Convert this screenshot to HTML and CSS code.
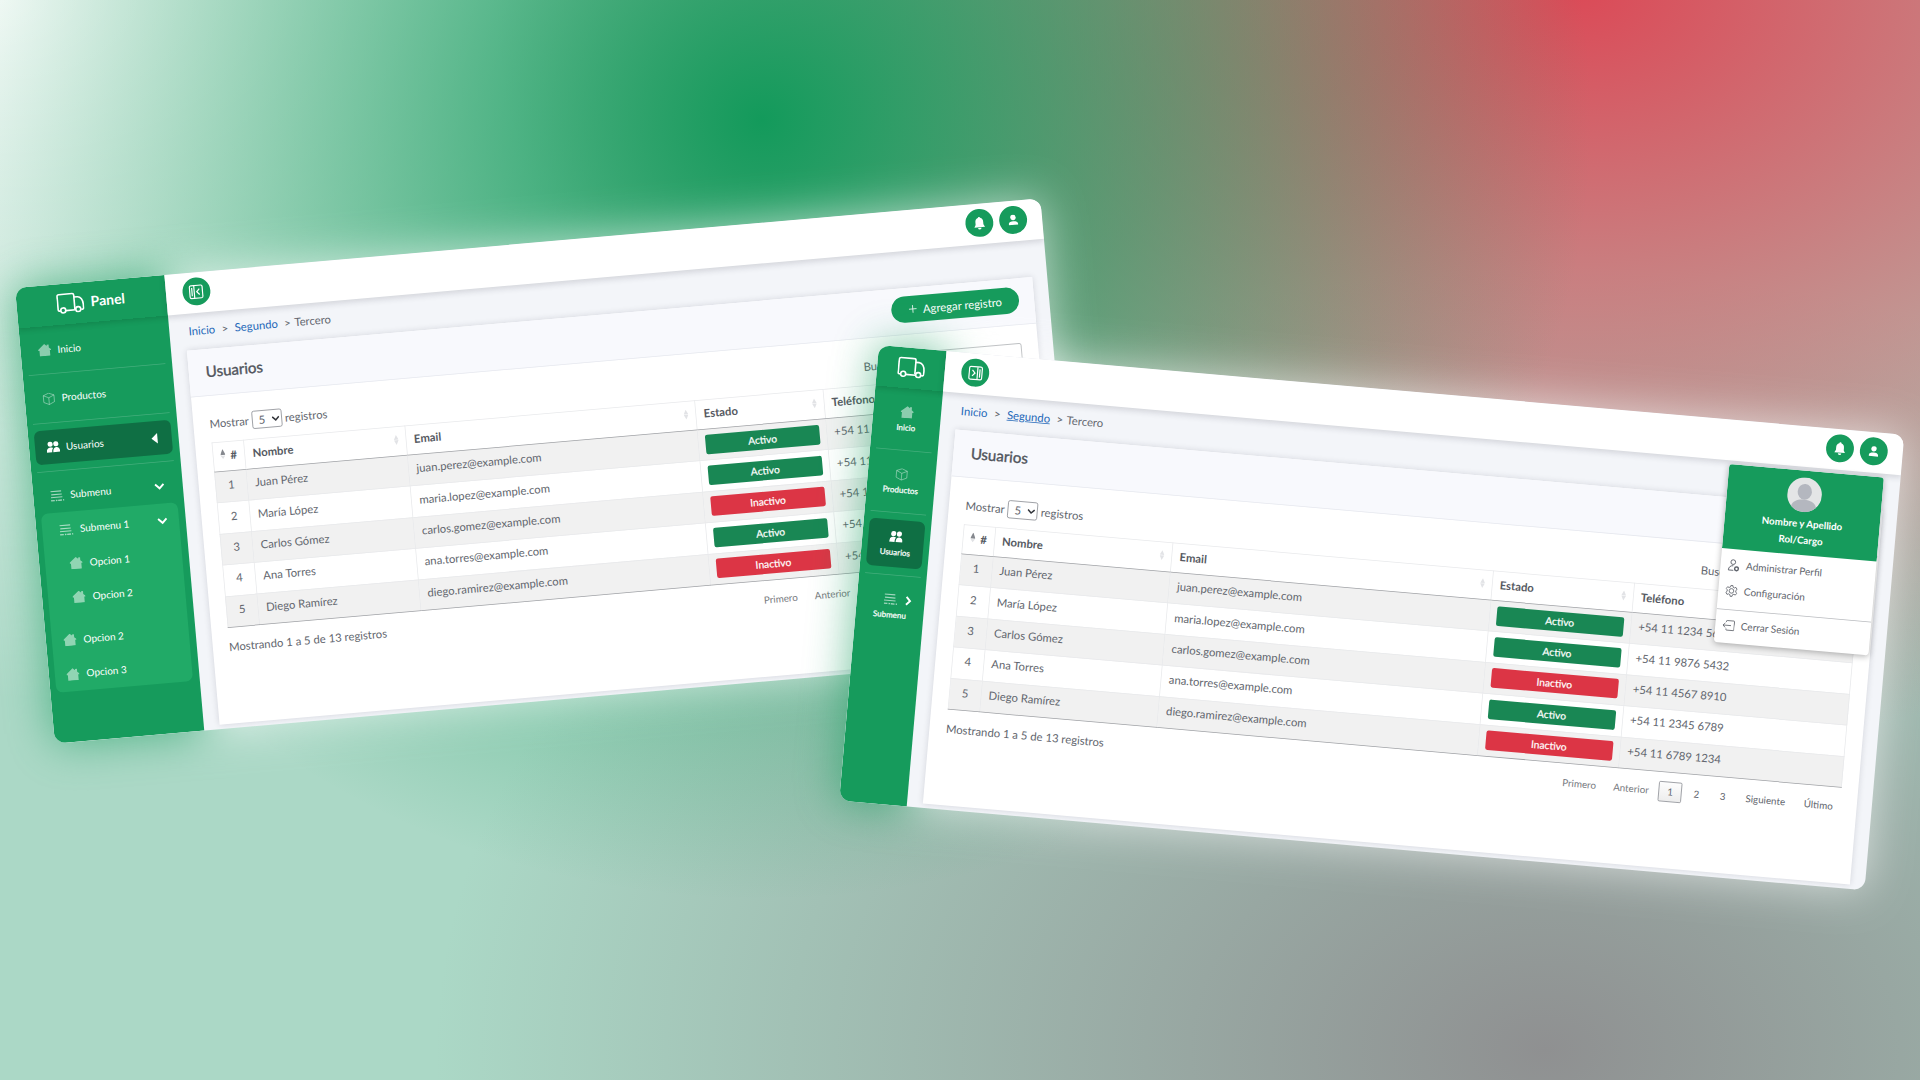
FILE: index.html
```
<!DOCTYPE html>
<html lang="es">
<head>
<meta charset="utf-8">
<title>Panel</title>
<link rel="stylesheet" href="styles.css">
</head>
<body>
<svg class="sprite" aria-hidden="true">
  <symbol id="truck" viewBox="0 0 38 28"><g fill="none" stroke="currentColor" stroke-width="2.2" stroke-linejoin="round"><path d="M5 24H3.2A1.6 1.6 0 0 1 1.6 22.4V4A2.4 2.4 0 0 1 4 1.6H22A2.4 2.4 0 0 1 24.400 4V23"/><path d="M24.400 6.500H29C33.500 6.500 36.400 12 36.400 17V22.400A1.600 1.600 0 0 1 34.800 24H33"/><path d="M12 24H25"/><circle cx="8.500" cy="23.500" r="3.400"/><circle cx="29" cy="23.500" r="3.400"/></g></symbol>
  <symbol id="home" viewBox="0 0 16 16"><path d="M8 0.500L11 3V1.500h2.500v3.600L16 7.200V8.500H14.500V15.500H1.500V8.500H0V7.200Z" fill="currentColor" opacity=".5"/></symbol>
  <symbol id="cube" viewBox="0 0 18 18"><path d="M9 1L16.500 4V13.500L9 17L1.500 13.500V4ZM1.500 4L9 7.500L16.500 4M9 7.500V17" fill="none" stroke="currentColor" stroke-linejoin="round" opacity=".55"/></symbol>
  <symbol id="users" viewBox="0 0 18 16"><g fill="currentColor"><circle cx="5.300" cy="4.200" r="3.400"/><circle cx="12.900" cy="4.200" r="3.400"/><path d="M0 15C0 10.500 2.300 8.500 5.200 8.500S8.800 9.500 8.800 9.500C7.500 11 7.300 13 7.300 15ZM8.700 15C8.700 10.500 10.500 8.500 13.200 8.500S18 10.500 18 15Z"/></g></symbol>
  <symbol id="lines" viewBox="0 0 18 16"><path d="M0 2H14.500M1 6.200H15M0 10H15.500" stroke="currentColor" stroke-width="1.500" opacity=".6"/><path d="M0 14.200H18" stroke="currentColor" stroke-width="1.800" stroke-dasharray="5 1.500 2 1" opacity=".6"/></symbol>
  <symbol id="down" viewBox="0 0 12 12"><path d="M1.200 3.500L6 8.200L10.800 3.500" fill="none" stroke="currentColor" stroke-width="2.200"/></symbol>
  <symbol id="right" viewBox="0 0 12 12"><path d="M4 1.500L8.200 6L4 10.500" fill="none" stroke="currentColor" stroke-width="2.200"/></symbol>
  <symbol id="bell" viewBox="0 0 18 20"><path d="M9 1a1.600 1.600 0 0 1 1.600 1.400C13.500 3.200 14.500 5.500 14.500 8.500V12L16.500 15.500H1.500L3.500 12V8.500C3.500 5.500 4.500 3.200 7.400 2.400A1.600 1.600 0 0 1 9 1ZM6.600 16.500H11.400A2.400 2.400 0 0 1 6.600 16.500Z" fill="currentColor"/></symbol>
  <symbol id="user" viewBox="0 0 16 16"><circle cx="8" cy="4.500" r="3.800" fill="currentColor"/><path d="M1.500 15V13.200C1.500 10.800 4.800 9.800 8 9.800S14.500 10.800 14.500 13.200V15Z" fill="currentColor"/></symbol>
  <symbol id="close-panel" viewBox="0 0 20 20"><g fill="none" stroke="currentColor" stroke-width="1.600"><rect x="1.500" y="1.500" width="17" height="17" rx="2"/><path d="M4.500 4.500V15.500M7.500 2V18M14.500 6L10.800 10L14.500 14"/></g></symbol>
  <symbol id="open-panel" viewBox="0 0 20 20"><g fill="none" stroke="currentColor" stroke-width="1.600"><rect x="1.500" y="1.500" width="17" height="17" rx="2"/><path d="M15.500 4.500V15.500M12.500 2V18M5.500 6L9.200 10L5.500 14"/></g></symbol>
  <symbol id="sort" viewBox="0 0 8 16"><path d="M4 0.500L7.500 7.600H0.500Z" fill="#e2e3e6"/><path d="M4 15.500L7.500 8.400H0.500Z" fill="#e2e3e6"/></symbol>
  <symbol id="sort-asc" viewBox="0 0 8 16"><path d="M4 0L8 9H0Z" fill="#85888e"/><path d="M4 15L7.500 10H0.500Z" fill="#e0e1e4"/></symbol>
  <symbol id="profile" viewBox="0 0 18 18"><g fill="none" stroke="currentColor" stroke-width="1.300"><circle cx="8" cy="4.500" r="3.300"/><path d="M9 16H2C2 12 4.500 9.500 8.500 9.500"/></g><circle cx="13.300" cy="13.500" r="2.600" fill="none" stroke="currentColor" stroke-width="2"/></symbol>
  <symbol id="gear" viewBox="0 0 20 20"><g fill="none" stroke="currentColor" stroke-width="1.300" stroke-linejoin="round"><circle cx="10" cy="10" r="3.600"/><path d="M8.500 1.500H11.500L12 4L14.200 5L16.500 4L18.500 7L16.700 8.800V11.200L18.500 13L16.500 16L14.200 15L12 16L11.500 18.500H8.500L8 16L5.800 15L3.500 16L1.500 13L3.300 11.200V8.800L1.500 7L3.500 4L5.800 5L8 4Z"/></g></symbol>
  <symbol id="exit" viewBox="0 0 20 18"><path d="M6.500 4V2.500A1 1 0 0 1 7.500 1.500H18A1 1 0 0 1 19 2.500V15.500A1 1 0 0 1 18 16.500H7.500A1 1 0 0 1 6.500 15.500V14M14 9H1.500M5 5.500L1.500 9L5 12.500" fill="none" stroke="currentColor" stroke-width="1.300"/></symbol>
</svg>

<section class="window window-open">
  <div class="frame">
    <aside class="sidebar">
      <div class="brand"><svg class="truck"><use href="#truck"/></svg><span>Panel</span></div>
      <nav>
        <a class="item"><svg class="ico"><use href="#home"/></svg><span>Inicio</span></a>
        <a class="item"><svg class="ico"><use href="#cube"/></svg><span>Productos</span></a>
        <a class="item active"><svg class="ico"><use href="#users"/></svg><span>Usuarios</span><i class="marker"></i></a>
        <a class="item"><svg class="ico"><use href="#lines"/></svg><span>Submenu</span><svg class="chev"><use href="#down"/></svg></a>
      </nav>
      <div class="submenu">
        <a class="sub first"><svg class="ico"><use href="#lines"/></svg><span>Submenu 1</span><svg class="chev"><use href="#down"/></svg></a>
        <a class="sub deep"><svg class="ico"><use href="#home"/></svg><span>Opcion 1</span></a>
        <a class="sub deep last"><svg class="ico"><use href="#home"/></svg><span>Opcion 2</span></a>
        <a class="sub"><svg class="ico"><use href="#home"/></svg><span>Opcion 2</span></a>
        <a class="sub"><svg class="ico"><use href="#home"/></svg><span>Opcion 3</span></a>
      </div>
    </aside>
    <main class="main">
      <header class="topbar">
        <button class="round"><svg class="toggle"><use href="#close-panel"/></svg></button>
        <div class="actions"><button class="round"><svg class="bell"><use href="#bell"/></svg></button><button class="round"><svg class="user"><use href="#user"/></svg></button></div>
      </header>
      <div class="crumbs"><a>Inicio</a><i>&gt;</i><a>Segundo</a><i class="tight">&gt;</i><span>Tercero</span></div>
      <div class="card">
        <div class="card-head"><h1>Usuarios</h1><button class="add"><svg viewBox="0 0 14 14"><path d="M7 0.500V13.500M0.500 7H13.500" stroke="currentColor" stroke-width="1.300"/></svg>Agregar registro</button></div>
        <div class="card-body">
          <div class="controls">
            <label>Mostrar <span class="select">5<svg><use href="#down"/></svg></span> registros</label>
            <label>Buscar: <span class="search"></span></label>
          </div>
          <table class="grid">
            <colgroup><col class="c1"><col class="c2"><col class="c3"><col class="c4"><col class="c5"></colgroup>
            <thead><tr>
              <th class="num"><svg><use href="#sort-asc"/></svg>#</th><th><div>Nombre<svg><use href="#sort"/></svg></div></th><th><div>Email<svg><use href="#sort"/></svg></div></th><th><div>Estado<svg><use href="#sort"/></svg></div></th><th><div>Teléfono<svg><use href="#sort"/></svg></div></th>
            </tr></thead>
            <tbody>
              <tr><td>1</td><td>Juan Pérez</td><td>juan.perez@example.com</td><td><b class="on">Activo</b></td><td class="tel">+54 11 1234 5678</td></tr>
              <tr><td>2</td><td>María López</td><td>maria.lopez@example.com</td><td><b class="on">Activo</b></td><td class="tel">+54 11 9876 5432</td></tr>
              <tr><td>3</td><td>Carlos Gómez</td><td>carlos.gomez@example.com</td><td><b class="off">Inactivo</b></td><td class="tel">+54 11 4567 8910</td></tr>
              <tr><td>4</td><td>Ana Torres</td><td>ana.torres@example.com</td><td><b class="on">Activo</b></td><td class="tel">+54 11 2345 6789</td></tr>
              <tr><td>5</td><td>Diego Ramírez</td><td>diego.ramirez@example.com</td><td><b class="off">Inactivo</b></td><td class="tel">+54 11 6789 1234</td></tr>
            </tbody>
          </table>
          <div class="foot">
            <span class="info">Mostrando 1 a 5 de 13 registros</span>
            <div class="pages"><a class="dim">Primero</a><a class="dim">Anterior</a><a class="n current">1</a><a class="n">2</a><a class="n">3</a><a class="next">Siguiente</a><a class="ult">Último</a></div>
          </div>
        </div>
      </div>
    </main>
  </div>
</section>

<section class="window window-mini">
  <div class="frame">
    <aside class="sidebar">
      <div class="brand"><svg class="truck"><use href="#truck"/></svg></div>
      <nav>
        <a class="item"><svg class="ico"><use href="#home"/></svg><span>Inicio</span></a>
        <a class="item"><svg class="ico"><use href="#cube"/></svg><span>Productos</span></a>
        <a class="item active"><svg class="ico"><use href="#users"/></svg><span>Usuarios</span></a>
        <a class="item"><svg class="ico"><use href="#lines"/></svg><span>Submenu</span><svg class="chev"><use href="#right"/></svg></a>
      </nav>
    </aside>
    <main class="main">
      <header class="topbar">
        <button class="round"><svg class="toggle"><use href="#open-panel"/></svg></button>
        <div class="actions"><button class="round"><svg class="bell"><use href="#bell"/></svg></button><button class="round"><svg class="user"><use href="#user"/></svg></button></div>
      </header>
      <div class="crumbs"><a>Inicio</a><i>&gt;</i><a class="hover">Segundo</a><i class="tight">&gt;</i><span>Tercero</span></div>
      <div class="card">
        <div class="card-head"><h1>Usuarios</h1></div>
        <div class="card-body">
          <div class="controls">
            <label>Mostrar <span class="select">5<svg><use href="#down"/></svg></span> registros</label>
            <label>Buscar: <span class="search"></span></label>
          </div>
          <table class="grid">
            <colgroup><col class="c1"><col class="c2"><col class="c3"><col class="c4"><col class="c5"></colgroup>
            <thead><tr>
              <th class="num"><svg><use href="#sort-asc"/></svg>#</th><th><div>Nombre<svg><use href="#sort"/></svg></div></th><th><div>Email<svg><use href="#sort"/></svg></div></th><th><div>Estado<svg><use href="#sort"/></svg></div></th><th><div>Teléfono<svg><use href="#sort"/></svg></div></th>
            </tr></thead>
            <tbody>
              <tr><td>1</td><td>Juan Pérez</td><td>juan.perez@example.com</td><td><b class="on">Activo</b></td><td class="tel">+54 11 1234 5678</td></tr>
              <tr><td>2</td><td>María López</td><td>maria.lopez@example.com</td><td><b class="on">Activo</b></td><td class="tel">+54 11 9876 5432</td></tr>
              <tr><td>3</td><td>Carlos Gómez</td><td>carlos.gomez@example.com</td><td><b class="off">Inactivo</b></td><td class="tel">+54 11 4567 8910</td></tr>
              <tr><td>4</td><td>Ana Torres</td><td>ana.torres@example.com</td><td><b class="on">Activo</b></td><td class="tel">+54 11 2345 6789</td></tr>
              <tr><td>5</td><td>Diego Ramírez</td><td>diego.ramirez@example.com</td><td><b class="off">Inactivo</b></td><td class="tel">+54 11 6789 1234</td></tr>
            </tbody>
          </table>
          <div class="foot">
            <span class="info">Mostrando 1 a 5 de 13 registros</span>
            <div class="pages"><a class="dim">Primero</a><a class="dim">Anterior</a><a class="n current">1</a><a class="n">2</a><a class="n">3</a><a class="next">Siguiente</a><a class="ult">Último</a></div>
          </div>
        </div>
      </div>
    </main>
    <div class="menu">
      <div class="menu-head">
        <svg class="avatar" viewBox="0 0 46 46"><circle cx="23" cy="23" r="23" fill="#e4e5e6"/><ellipse cx="23" cy="19" rx="9.500" ry="10.500" fill="#b4b7bf"/><path d="M6.500 39C8 32 15 29.500 23 29.500S38 32 39.500 39A23 23 0 0 1 6.500 39Z" fill="#b4b7bf"/></svg>
        <strong>Nombre y Apellido</strong><strong>Rol/Cargo</strong>
      </div>
      <a><svg><use href="#profile"/></svg>Administrar Perfil</a>
      <a><svg><use href="#gear"/></svg>Configuración</a>
      <hr>
      <a class="exit"><svg><use href="#exit"/></svg>Cerrar Sesión</a>
    </div>
  </div>
</section>
</body>
</html>
```
FILE: styles.css
```
* { box-sizing: border-box; }
body {
  margin: 0;
  width: 1920px;
  height: 1080px;
  overflow: hidden;
  position: relative;
  font-family: Lato, "Noto Sans", sans-serif;
  font-size: 15px;
  color: #62666e;
  background:
    radial-gradient(830px 780px at 762px 120px, #139a5b 0, transparent 100%),
    radial-gradient(1086px 764px at 1580px -10px, #db4a57 0, transparent 100%),
    radial-gradient(1110px 780px at 1545px 1050px, #8f9091 0, transparent 100%),
    radial-gradient(1200px 700px at 0 0, #ffffff 0, transparent 100%),
    #abd8c6;
}
.sprite { position: absolute; width: 0; height: 0; }
button { border: 0; font: inherit; padding: 0; }

/* Floating windows, tilted over the backdrop */
.window {
  position: absolute;
  width: 1366px;
  height: 607px;
  transform-origin: 0 0;
}
.window-open { left: 15.300px; top: 287.800px; transform: rotate(-5deg) scale(.7535); --side: 198.500px; }
.window-mini { left: 879.200px; top: 345.200px; transform: rotate(5deg) scale(.7535); --side: 90px; }
.window::before {
  content: "";
  position: absolute;
  inset: 0;
  background: linear-gradient(90deg, #169b5c var(--side), #fff var(--side));
  filter: blur(30px);
  opacity: .62;
}
.frame {
  position: relative;
  display: flex;
  height: 100%;
  border-radius: 15px;
  overflow: hidden;
  background: #f3f5f9;
}

/* Sidebar */
.sidebar { width: var(--side); flex: none; background: #169b5c; color: #fff; font-size: 13.300px; }
.brand {
  height: 54px;
  display: flex;
  align-items: center;
  justify-content: center;
  gap: 9px;
  padding-bottom: 2px;
  font-size: 18.500px;
  font-weight: 700;
  box-shadow: 0 3px 7px rgba(0, 50, 20, .18);
}
.window-open .brand { padding-right: 2px; }
.truck { width: 37px; height: 28px; }
.ico { width: 18px; height: 17px; flex: none; }
.chev { width: 14px; height: 14px; }
.item { position: relative; display: flex; align-items: center; border-radius: 8px; }
.window-open nav { padding: 9px 9px 0 8px; }
.window-open .item { height: 45px; margin-bottom: 19.600px; padding: 0 15px 0 15px; gap: 8px; }
.window-open .item:last-child { margin-bottom: 0; }
.window-open .item .chev, .window-open .item .marker, .first .chev { margin-left: auto; }
.item:not(:last-child)::after {
  content: "";
  position: absolute;
  left: 0;
  right: 0;
  bottom: -10px;
  border-top: 1px solid rgba(255, 255, 255, .2);
}
.active { background: #0f6f44; }
.marker { border: solid transparent; border-width: 7px 8px 7px 0; border-right-color: #fff; margin-right: 4px; }
.submenu {
  margin: 0 9px 0 8px;
  height: 238px;
  padding-top: 1px;
  border-radius: 9px;
  background: #21aa67;
}
.sub { display: flex; align-items: center; height: 45.200px; gap: 9px; padding: 0 15px; }
.sub.first { padding-left: 23px; }
.sub.deep { padding-left: 32px; }
.sub.last { margin-bottom: 11px; }
.window-mini nav { padding: 0 8px; }
.window-mini .item { height: 63px; margin: 9px 0 20px; flex-direction: column; justify-content: center; gap: 5px; font-size: 10.600px; line-height: 14px; -webkit-text-stroke: .3px; }
.window-mini .item:not(:last-child)::after { bottom: -11px; }
.window-mini .item .chev { position: absolute; left: 53px; top: 16px; }

/* Main column */
.main { flex: 1; display: flex; flex-direction: column; min-width: 0; }
.topbar {
  height: 54px;
  flex: none;
  display: flex;
  align-items: center;
  justify-content: space-between;
  padding: 0 20px 3px 22px;
  background: #fff;
  box-shadow: 0 3px 9px rgba(30, 30, 50, .16);
}
.actions { display: flex; gap: 8px; }
.round {
  width: 37px;
  height: 37px;
  border-radius: 50%;
  background: #169b5c;
  color: #fff;
  display: flex;
  align-items: center;
  justify-content: center;
}
.toggle { width: 20px; height: 20px; }
.bell { width: 17px; height: 20px; }
.user { width: 15px; height: 15px; }
.crumbs { height: 49px; display: flex; align-items: center; padding: 0 26px 4px; }
.crumbs a { color: #2468b8; }
.crumbs .hover { text-decoration: underline; }
.crumbs i { font-style: normal; width: 26px; text-align: center; }
.crumbs .tight { width: 22px; padding-left: 4px; }
.card {
  flex: 1;
  margin: 0 20px 6px 21px;
  background: #fff;
  box-shadow: 0 0 9px rgba(30, 30, 50, .15);
}
.card-head {
  height: 62px;
  display: flex;
  align-items: center;
  justify-content: space-between;
  padding: 0 20px 4px 23px;
  background: #f8f9fd;
  border-bottom: 1px solid #e6e8ee;
}
h1 { margin: 0; font-size: 20px; font-weight: 400; color: #50545c; -webkit-text-stroke: .5px; }
.add {
  width: 170px;
  height: 35px;
  border-radius: 18px;
  background: #169b5c;
  color: #fff;
  display: flex;
  align-items: center;
  justify-content: center;
  gap: 8px;
}
.add svg { width: 11px; height: 11px; }
.card-body { padding: 25px 22px 0; }
.controls { height: 24px; margin-bottom: 13px; display: flex; align-items: center; justify-content: space-between; }
.controls label { display: flex; align-items: center; gap: 4px; }
.select {
  width: 40px;
  height: 24px;
  border: 1px solid #85888e;
  border-radius: 3px;
  display: flex;
  align-items: center;
  justify-content: space-between;
  padding: 0 2px 0 8px;
}
.select svg { width: 11px; height: 11px; color: #33363c; }
.search { width: 159px; height: 26px; border: 1px solid #9a9da2; border-radius: 3px; }

/* Users table */
.grid { width: 100%; border-collapse: collapse; table-layout: fixed; }
.window-open .c1 { width: 42.500px; }
.window-open .c2 { width: 215px; }
.window-open .c3 { width: 386px; }
.window-open .c4 { width: 170.500px; }
.window-mini .c1 { width: 41.500px; }
.window-mini .c2 { width: 236.500px; }
.window-mini .c3 { width: 426.500px; }
.window-mini .c4 { width: 188px; }
th, td { border: 1px solid #e8e9eb; text-align: left; padding: 0 10px; white-space: nowrap; }
th { height: 39px; font-weight: 700; color: #565a62; border-bottom: 1px solid #9d9fa3; padding: 0 9px 4px 10px; }
th div { display: flex; justify-content: space-between; align-items: center; }
th svg { width: 7px; height: 14px; }
.num { text-align: center; padding: 0 0 4px; }
.num svg { margin-right: 6px; }
td { height: 41.400px; padding-bottom: 6px; }
td:nth-child(4) { padding-bottom: 1px; }
td:first-child { text-align: center; }
tbody tr:nth-child(odd) { background: #f1f1f1; }
tbody tr:last-child td { border-bottom: 1px solid #9d9fa3; }
td b {
  display: flex;
  align-items: center;
  justify-content: center;
  height: 26px;
  margin: 0 -1px;
  border-radius: 3px;
  color: #fff;
  font-size: 13.600px;
  font-weight: 400;
  -webkit-text-stroke: .25px;
}
.on { background: #198754; }
.off { background: #dc3545; }
.foot { display: flex; align-items: center; justify-content: space-between; padding-top: 12px; }
.pages { display: flex; gap: 4px; font-size: 13px; }
.pages a { height: 27px; display: flex; align-items: center; justify-content: center; width: 65px; }
.pages .n { width: 31px; }
.pages .current { border: 1px solid #85888e; border-radius: 2px; background: linear-gradient(#fdfdfd, #ededed); }
.pages .dim { color: #777a80; }
.pages .next { width: 75px; }
.pages .ult { width: 58px; }

/* Account menu */
.menu {
  position: absolute;
  left: 1138px;
  top: 59px;
  width: 206px;
  height: 237px;
  border-radius: 5px;
  overflow: hidden;
  background: #fff;
  font-size: 14px;
  box-shadow: 0 2px 8px rgba(0, 0, 0, .3);
}
.menu-head {
  height: 112px;
  background: #169b5c;
  color: #fff;
  display: flex;
  flex-direction: column;
  align-items: center;
  padding-top: 9px;
}
.avatar { width: 46px; height: 46px; margin-bottom: 4px; }
.menu strong { line-height: 22px; font-size: 13px; }
.menu a { height: 34px; margin-top: 4px; display: flex; align-items: center; gap: 8px; padding-left: 9px; font-size: 13.300px; }
.menu a + a { margin-top: 0; }
.menu a svg { width: 17px; height: 17px; }
.menu hr { margin: 8px 0 3px; border: 0; border-top: 1px solid #b9bbbf; }
.menu .exit { margin: 0; }
```
